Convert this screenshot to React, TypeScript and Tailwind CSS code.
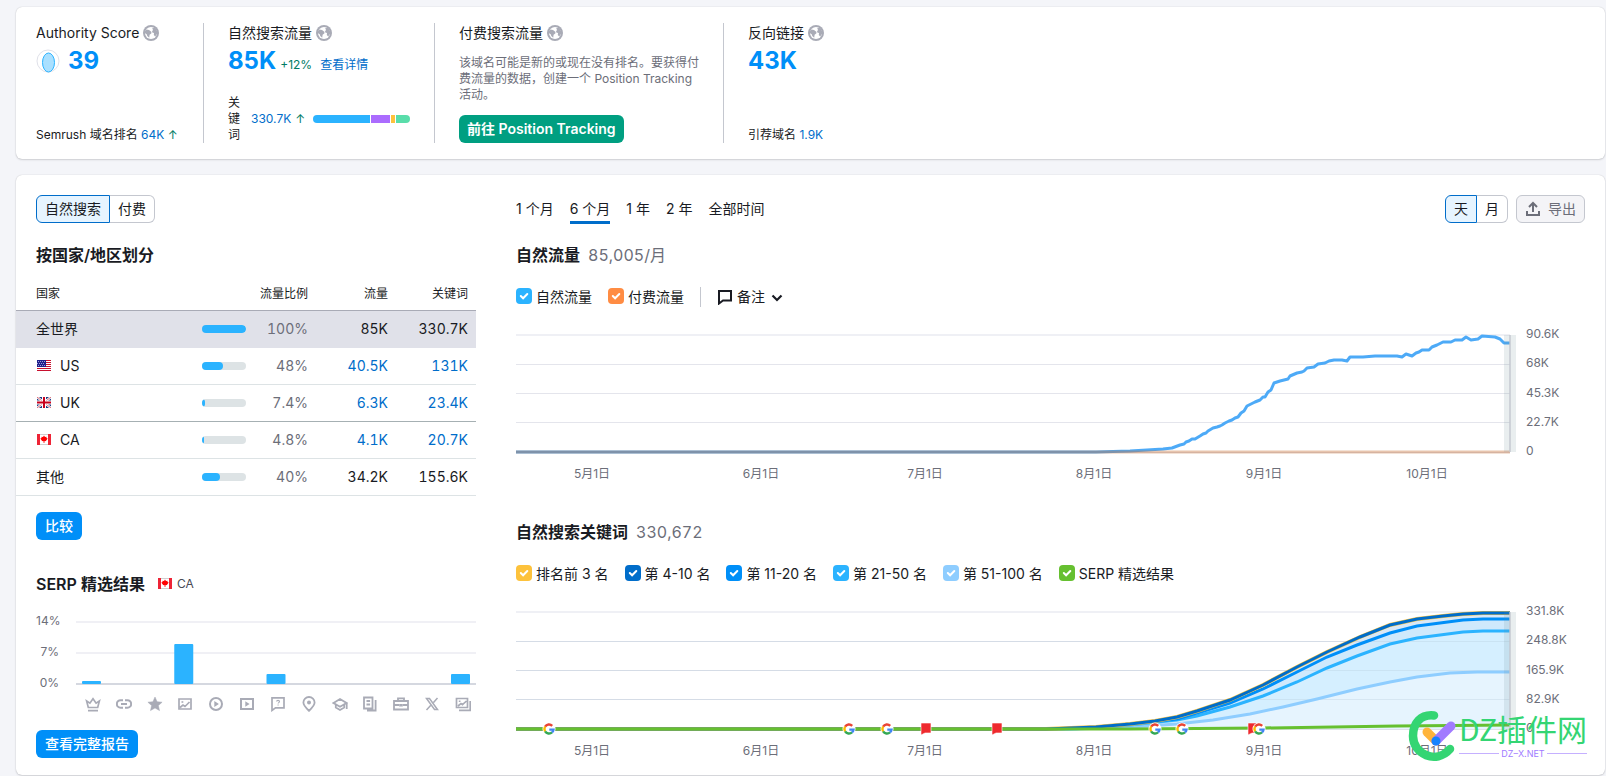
import type { ReactNode } from 'react';

type Point = [number, number];

interface CountryRow {
  name: string;
  flag?: 'us' | 'uk' | 'ca';
  share: number;
  traffic: string;
  keywords: string;
  rowClass?: string;
}

const countries: CountryRow[] = [
  { name: '全世界', share: 100, traffic: '85K', keywords: '330.7K', rowClass: 'bg-[#e0e1e9] border-[#e0e1e9]' },
  { name: 'US', flag: 'us', share: 48, traffic: '40.5K', keywords: '131K' },
  { name: 'UK', flag: 'uk', share: 7.4, traffic: '6.3K', keywords: '23.4K', rowClass: 'border-[#a6b0b3]' },
  { name: 'CA', flag: 'ca', share: 4.8, traffic: '4.1K', keywords: '20.7K' },
  { name: '其他', share: 40, traffic: '34.2K', keywords: '155.6K' },
];

const keywordSeries = [
  { label: '排名前 3 名', color: 'bg-[#fdc23c]' },
  { label: '第 4-10 名', color: 'bg-[#006dca]' },
  { label: '第 11-20 名', color: 'bg-[#008ff8]' },
  { label: '第 21-50 名', color: 'bg-[#2bb3ff]' },
  { label: '第 51-100 名', color: 'bg-[#8ecdff]' },
  { label: 'SERP 精选结果', color: 'bg-[#66c030]' },
];

const CHART_WIDTH = 994;
const BASELINE = 117;

const monthTicks = [
  { x: 76, label: '5月1日' },
  { x: 245, label: '6月1日' },
  { x: 409, label: '7月1日' },
  { x: 578, label: '8月1日' },
  { x: 748, label: '9月1日' },
  { x: 911, label: '10月1日' },
];

const trafficPoints: Point[] = [
  [0, 117], [545, 117], [580, 117], [614, 116], [631, 115], [647, 114], [656, 113], [664, 110], [668, 109],
  [670, 107], [673, 106], [676, 104], [679, 104], [684, 101], [687, 99], [690, 98], [692, 96], [697, 93],
  [701, 92], [704, 91], [706, 90], [709, 88], [713, 86], [716, 85], [719, 83], [722, 82], [725, 78], [728, 76],
  [731, 71], [739, 67], [744, 65], [747, 62], [749, 62], [752, 57], [755, 55], [758, 48], [764, 46], [772, 44],
  [774, 41], [781, 38], [786, 37], [788, 36], [791, 33], [798, 32], [802, 29], [809, 28], [813, 26], [818, 25],
  [826, 25], [831, 26], [834, 22], [840, 22], [847, 22], [859, 21], [871, 21], [881, 21], [886, 22], [890, 19],
  [896, 21], [900, 18], [903, 17], [906, 15], [913, 15], [916, 12], [921, 10], [927, 7], [935, 7], [939, 5],
  [946, 5], [950, 2], [955, 5], [962, 4], [966, 1], [979, 2], [984, 4], [988, 8], [994, 8],
];

const top10: Point[] = [
  [0, 117], [530, 117], [580, 115], [614, 112], [639, 109], [661, 105], [681, 99], [714, 88], [747, 73],
  [781, 55], [811, 40], [844, 25], [874, 13], [901, 7], [927, 4], [947, 2], [967, 1], [994, 1],
];
const top20: Point[] = [
  [0, 117], [540, 117], [580, 115], [614, 112], [661, 107], [681, 101], [714, 91], [747, 77], [781, 60],
  [811, 45], [841, 33], [874, 21], [901, 14], [947, 8], [967, 7], [994, 7],
];
const top50: Point[] = [
  [0, 117], [550, 117], [580, 116], [614, 113], [661, 108], [681, 104], [714, 95], [747, 84], [781, 70],
  [811, 56], [841, 44], [874, 32], [901, 26], [947, 20], [967, 19], [994, 19],
];
const top100: Point[] = [
  [0, 117], [560, 117], [614, 115], [661, 112], [697, 108], [734, 102], [767, 95], [801, 87], [841, 77],
  [874, 70], [901, 65], [934, 61], [961, 60], [994, 60],
];
const serpLine: Point[] = [[0, 117], [614, 117], [747, 116], [881, 114], [994, 113]];

const toLine = (points: Point[]) => points.map(([x, y]) => `${x},${y}`).join(' ');
const toArea = (points: Point[]) => `${toLine(points)} ${CHART_WIDTH},${BASELINE} 0,${BASELINE}`;
const toPercent = (x: number) => `${(x / CHART_WIDTH) * 100}%`;

const GlobeIcon = () => (
  <svg className="size-4 shrink-0" viewBox="0 0 16 16">
    <circle cx="8" cy="8" r="8" fill="#a9abb6" />
    <circle cx="8" cy="8" r="6" fill="#fff" />
    <path
      d="M2 6l1.500-1.500L6 5l2.300 1.700.2 1.600-1.900 1.500-.4 2.900-1.900-1.600-.6-1.800L2 8.200zM9 3.500l3-1 2 3.500v3l-1.800 2.600-1.400-1.700.2-1.800-1.700-.6-.2-1.500 1.100-1.100z"
      fill="#a9abb6"
    />
  </svg>
);

const Flag = ({ code }: { code: 'us' | 'uk' | 'ca' }) => (
  <svg className="h-[11px] w-[14px] shrink-0" viewBox="0 0 14 11">
    {code === 'us' && (
      <>
        <path d="M0 0h14v11H0z" fill="#fff" />
        <path d="M0 .5h14M0 2.5h14M0 4.5h14M0 6.5h14M0 8.5h14M0 10.5h14" stroke="#c8102e" />
        <path d="M0 0h9v7H0z" fill="#20208c" />
        <path d="M1 1.5h8M0 3.5h8M1 5.5h8" stroke="#9c9cd8" strokeDasharray="1 1" />
      </>
    )}
    {code === 'uk' && (
      <>
        <path d="M0 0h14v11H0z" fill="#1b3a80" />
        <path d="M0 0l14 11M14 0L0 11" stroke="#fff" strokeWidth="2.4" />
        <path d="M0 0l14 11M14 0L0 11" stroke="#d04050" strokeWidth=".8" />
        <path d="M7 0v11M0 5.5h14" stroke="#fff" strokeWidth="4" />
        <path d="M7 0v11M0 5.5h14" stroke="#c8001c" strokeWidth="2" />
      </>
    )}
    {code === 'ca' && (
      <>
        <path d="M0 0h14v11H0z" fill="#fff" />
        <path d="M0 .5h14M0 10.5h14" stroke="#d0d0d0" />
        <path d="M0 0h3v11H0zM11 0h3v11h-3z" fill="#ee2436" />
        <path d="M7 1.500l1 1.500 1.500-.3v1.200l1.200.6-1.800 2.500-1.500.2v1.800h-.8V7.200l-1.500-.2-1.800-2.500 1.200-.6V2.700L6 3z" fill="#f00" />
      </>
    )}
  </svg>
);

// SERP feature icons, drawn in the order of the chart columns
const serpIcons: ReactNode[] = [
  <path d="M1.600 5l3.300 2.200L8 2.700l3.100 4.500L14.400 5l-1.700 6.500H3.300zM3 14.700h10" strokeWidth="1.700" />,
  <path d="M7 4.2H4.6a3.7 3.7 0 0 0 0 7.5H7M9 4.2h2.4a3.7 3.7 0 0 1 0 7.5H9M5 8h6" />,
  <path d="M8 1l2.100 4.700 5 .5-3.700 3.400 1.100 5L8 12l-4.500 2.600 1.100-5L.900 6.200l5-.5z" fill="currentColor" strokeWidth=".5" />,
  <>
    <path d="M2 3h12v10H2zM3 11.5l3-2.5 2 1.5L12.5 6" strokeWidth="1.700" />
    <path d="M4.5 5.2h1.8v1.6H4.5z" fill="currentColor" stroke="none" />
  </>,
  <>
    <circle cx="8" cy="8" r="6" />
    <path d="M6.3 5l4.600 3-4.600 3z" fill="currentColor" stroke="none" />
  </>,
  <>
    <path d="M2 3h12v10H2z" />
    <path d="M6.3 5.200L10.600 8l-4.300 2.800z" fill="currentColor" stroke="none" />
  </>,
  <>
    <path d="M2 1.800h12v10H5.500L2 14.400z" strokeWidth="1.700" />
    <path d="M6.600 5.600c0-1.600 2.900-1.600 2.900 0 0 1-1.400 1-1.400 2M8.100 8.400v1.200" strokeWidth="1.100" />
  </>,
  <>
    <path d="M8 14.800C5 12 2.400 9.600 2.400 6.600a5.600 5.600 0 0 1 11.200 0C13.600 9.600 11 12 8 14.800z" strokeWidth="1.800" />
    <circle cx="8" cy="6.600" r="2" fill="currentColor" stroke="none" />
  </>,
  <path d="M1.500 7L8 3l6.500 4L8 10.800zM3.800 8.500v3L8 14l4.200-2.500v-3M14.700 7.500V13" strokeWidth="1.800" />,
  <path d="M2 1.500h8.500v11H2zM4.500 5h3.600M4.500 8.500h3.600M13.600 4v10.500H5" strokeWidth="1.800" />,
  <>
    <path d="M1 5h14v8.500H1zM5 5V2.300h6V5M1 9h5M10 9h5" strokeWidth="1.800" />
    <path d="M6.200 8h3.600v2.500H6.200z" fill="currentColor" stroke="none" />
  </>,
  <>
    <path d="M2.500 2.500h3l8 11h-3z" strokeWidth="1.500" />
    <path d="M13.500 2L9.300 6.700M6.800 9.300L2.500 14" strokeWidth="1.500" />
  </>,
  <>
    <path d="M1.500 2.500h11v9h-11zM3 10l3-2.500 1.500 1.200L11.500 5M15.200 5v9.300H4" strokeWidth="1.700" />
    <path d="M3.800 4.500h1.700v1.500H3.800z" fill="currentColor" stroke="none" />
  </>,
];

// bar heights per SERP feature, in chart pixels
const serpBars = [3, 0, 0, 40, 0, 0, 10, 0, 0, 0, 0, 0, 10];

const SerpChart = () => (
  <div className="mt-[17px] flex pl-5">
    <div className="flex h-[78px] w-[23px] flex-col justify-between text-right text-xs leading-4 text-[#6c6e79]">
      <span>14%</span>
      <span>7%</span>
      <span>0%</span>
    </div>
    <div className="ml-[17px] flex-1">
      <svg className="mt-2 h-[64px] w-full" viewBox="0 0 400 64" preserveAspectRatio="none">
        <path d="M0 1h400M0 32h400" stroke="#f0f0f5" strokeWidth="2" />
        <path d="M0 63h400" stroke="#d5d8e0" strokeWidth="2" />
        {serpBars.map((height, i) =>
          height > 0 ? (
            <rect key={i} x={6 + i * 30.75} y={63 - height} width="19" height={height} rx="1" fill="#2bb3ff" />
          ) : null
        )}
      </svg>
      <div className="mt-[11px] flex justify-between pr-[5px] pl-[9px]">
        {serpIcons.map((icon, i) => (
          <svg key={i} className="size-4 text-[#a9abb6]" viewBox="0 0 16 16" fill="none" stroke="currentColor" strokeWidth="2">
            {icon}
          </svg>
        ))}
      </div>
    </div>
  </div>
);

const GoogleMark = () => (
  <>
    <circle r="6.500" fill="#fff" />
    <g fill="none" strokeWidth="2.400">
      <path d="M3.200-3.200A4.500 4.500 0 0 0-3.900-2.300" stroke="#ea4335" />
      <path d="M-3.900-2.300a4.500 4.500 0 0 0 0 4.600" stroke="#fbbc05" />
      <path d="M-3.900 2.300A4.500 4.500 0 0 0 3 3.400" stroke="#34a853" />
      <path d="M3 3.400A4.500 4.500 0 0 0 4.500.600H.300" stroke="#4285f4" />
    </g>
  </>
);

const NoteMark = () => <path d="M-5-6H5V4H-1L-5 6z" fill="#ee2a2e" stroke="#fff" strokeWidth=".6" />;

const markers = [
  { x: 33, type: 'google' },
  { x: 333, type: 'google' },
  { x: 371, type: 'google' },
  { x: 410, type: 'note' },
  { x: 481, type: 'note' },
  { x: 639, type: 'google' },
  { x: 666, type: 'google' },
  { x: 737, type: 'note' },
  { x: 743, type: 'google' },
];

interface TrendChartProps {
  yLabels: string[];
  withMarkers?: boolean;
  children: ReactNode;
}

const TrendChart = ({ yLabels, withMarkers, children }: TrendChartProps) => (
  <div className="flex">
    <svg className="mt-2 h-[150px] min-w-0 flex-1 overflow-visible">
      <svg width="100%" height="118" viewBox="0 -1 994 118" preserveAspectRatio="none" overflow="visible">
        <path d="M0 0h994" stroke="#eff0f5" strokeWidth="2" />
        <path d="M0 29.500h994M0 58.500h994M0 87.500h994" stroke="#e4e5ec" />
        <path d="M0 117.500h994" stroke="#e0e1e9" />
        {children}
        <path d="M988 0h12v117h-12z" fill="#6b8a92" opacity=".15" />
        <path d="M994 0v117" stroke="#c4c7cf" strokeWidth="2" opacity=".7" />
      </svg>
      {withMarkers &&
        markers.map((marker) => (
          <svg key={marker.x} x={toPercent(marker.x)} y="118" overflow="visible">
            {marker.type === 'google' ? <GoogleMark /> : <NoteMark />}
          </svg>
        ))}
      {monthTicks.map((tick) => (
        <text key={tick.label} x={toPercent(tick.x)} y="144" textAnchor="middle" className="fill-[#6c6e79] text-xs">
          {tick.label}
        </text>
      ))}
    </svg>
    <div className="flex h-[133px] w-[75px] flex-col justify-between pl-4 text-xs leading-4 text-[#6c6e79]">
      {yLabels.map((label) => (
        <span key={label}>{label}</span>
      ))}
    </div>
  </div>
);

const Check = ({ label, color }: { label: string; color: string }) => (
  <label className="flex items-start gap-1 text-sm leading-5">
    <span className="relative mt-px flex size-4">
      <input type="checkbox" defaultChecked className={`size-4 appearance-none rounded ${color}`} />
      <svg className="pointer-events-none absolute inset-0 size-4" viewBox="0 0 16 16" fill="none">
        <path d="M4.800 8l2.300 2.300L11.300 6" stroke="#fff" strokeWidth="2" strokeLinecap="round" />
      </svg>
    </span>
    {label}
  </label>
);

const Pills = ({ first, second }: { first: string; second: string }) => (
  <div className="flex text-sm leading-5">
    <button className="h-7 rounded-l-md border border-[#006dca] bg-[#e6f4ff] px-2">{first}</button>
    <button className="h-7 rounded-r-md border border-l-0 border-[#c4c7cf] px-2">{second}</button>
  </div>
);

const Summary = () => (
  <section className="flex rounded-md bg-white px-5 py-4 shadow-[0_0_1px_rgba(25,27,35,0.25),0_1px_2px_rgba(25,27,35,0.15)]">
    <div className="flex min-h-[120px] w-[168px] flex-col border-r border-[#c4c7cf]">
      <div className="flex items-center gap-1 text-sm leading-5">
        Authority Score <GlobeIcon />
      </div>
      <div className="mt-0.5 flex items-center gap-2 text-2xl leading-8 font-bold text-[#008ff8]">
        <svg className="size-6" viewBox="0 0 24 24">
          <circle cx="12" cy="12" r="11" fill="#fff" stroke="#e0e1e9" />
          <ellipse cx="12.500" cy="13.500" rx="6" ry="9.500" fill="#aae0ff" stroke="#2bb3ff" />
        </svg>
        39
      </div>
      <div className="mt-auto text-xs leading-4">
        Semrush 域名排名 <a href="#rank" className="text-[#006dca]">64K</a> <span className="text-[#007c65]">↑</span>
      </div>
    </div>
    <div className="flex w-[231px] flex-col border-r border-[#c4c7cf] px-6">
      <div className="flex items-center gap-1 text-sm leading-5">
        自然搜索流量 <GlobeIcon />
      </div>
      <div className="mt-0.5 flex items-baseline">
        <span className="text-2xl leading-8 font-bold text-[#008ff8]">85K</span>
        <span className="ml-1 text-xs text-[#007c65]">+12%</span>
        <a href="#details" className="ml-2 text-xs text-[#006dca]">查看详情</a>
      </div>
      <div className="mt-auto flex items-center text-xs leading-4">
        <span className="w-3">关键词</span>
        <a href="#keywords" className="ml-[11px] text-[#006dca]">330.7K</a>
        <span className="ml-1 text-[#007c65]">↑</span>
        <div className="ml-2 flex h-2 flex-1 gap-px overflow-hidden rounded">
          <div className="flex-[57] bg-[#2bb3ff]" />
          <div className="flex-[19] bg-[#ab6cfe]" />
          <div className="flex-[4] bg-[#fdc23c]" />
          <div className="flex-[14] bg-[#59ddaa]" />
        </div>
      </div>
    </div>
    <div className="flex w-[289px] flex-col items-start border-r border-[#c4c7cf] px-6">
      <div className="flex items-center gap-1 text-sm leading-5">
        付费搜索流量 <GlobeIcon />
      </div>
      <p className="mt-3 text-xs leading-4 text-[#6c6e79]">
        该域名可能是新的或现在没有排名。要获得付费流量的数据，创建一个 Position Tracking 活动。
      </p>
      <button className="mt-auto h-7 rounded-md bg-[#009f81] px-2 text-sm leading-5 font-semibold whitespace-nowrap text-white">
        前往 Position Tracking
      </button>
    </div>
    <div className="flex flex-col pl-6">
      <div className="flex items-center gap-1 text-sm leading-5">
        反向链接 <GlobeIcon />
      </div>
      <div className="mt-0.5 text-2xl leading-8 font-bold text-[#008ff8]">43K</div>
      <div className="mt-auto text-xs leading-4">
        引荐域名 <a href="#domains" className="text-[#006dca]">1.9K</a>
      </div>
    </div>
  </section>
);

const CountryTable = () => (
  <table className="mt-3 w-full text-sm leading-5">
    <thead>
      <tr className="h-[31px] border-b border-[#a9abb6] text-xs leading-4">
        <th className="pl-5 text-left font-normal">国家</th>
        <th className="w-[60px]" aria-label="份额" />
        <th className="w-[61px] text-right font-normal whitespace-nowrap">流量比例</th>
        <th className="w-20 text-right font-normal">流量</th>
        <th className="w-[88px] pr-2 text-right font-normal">关键词</th>
      </tr>
    </thead>
    <tbody>
      {countries.map((row) => {
        const valueColor = row.flag ? 'text-[#006dca]' : '';
        return (
          <tr key={row.name} className={`h-[37px] border-b tabular-nums ${row.rowClass ?? 'border-[#dde3e5]'}`}>
            <td className="pl-5">
              <span className="flex items-center gap-[9px]">
                {row.flag && <span className="pl-px"><Flag code={row.flag} /></span>}
                {row.name}
              </span>
            </td>
            <td>
              <div className="ml-[15px] h-2 w-11 overflow-hidden rounded bg-[#dde3e5]">
                <div className="h-2 rounded-r bg-[#2bb3ff]" style={{ width: `${row.share}%` }} />
              </div>
            </td>
            <td className="text-right text-[#6c6e79]">{row.share}%</td>
            <td className={`text-right ${valueColor}`}>{row.flag ? <a href="#traffic">{row.traffic}</a> : row.traffic}</td>
            <td className={`pr-2 text-right ${valueColor}`}>{row.flag ? <a href="#keywords">{row.keywords}</a> : row.keywords}</td>
          </tr>
        );
      })}
    </tbody>
  </table>
);

const Watermark = () => (
  <div className="pointer-events-none absolute right-[18px] bottom-[13px] flex items-center gap-px">
    <svg className="h-[52px] w-[50px]" viewBox="0 0 50 52" fill="none" strokeLinecap="round">
      <path d="M26 5.500C13 4 5 13 5 26c0 18 23 29 37 13" stroke="#34d573" strokeWidth="8.500" />
      <path d="M19 22l9 9" stroke="#ffb43c" strokeWidth="9" />
      <path d="M28 31l15-15" stroke="#a17bff" strokeWidth="9" />
      <circle cx="28" cy="31" r="4.500" fill="#1683ff" />
    </svg>
    <div className="text-center">
      <div className="font-['Noto_Sans_CJK_SC',sans-serif] text-[30px] leading-8 font-normal text-[#34d573]">DZ插件网</div>
      <div className="mt-1 flex items-center gap-0.5 text-[9px] leading-3 text-[#a17bff]">
        <span className="h-px flex-1 bg-[#c5b0ff]" />
        DZ–X.NET
        <span className="h-px flex-1 bg-[#c5b0ff]" />
      </div>
    </div>
  </div>
);

const periods = ['1 个月', '6 个月', '1 年', '2 年', '全部时间'];

export default function App() {
  return (
    <main className="flex flex-col gap-4 bg-[#f4f5f9] pt-[7px] pr-px pb-px pl-4 font-['Inter','Noto_Sans_CJK_SC',sans-serif] text-[#191b23]">
      <Summary />
      <section className="relative flex gap-10 rounded-md bg-white pt-5 pr-5 shadow-[0_0_1px_rgba(25,27,35,0.25),0_1px_2px_rgba(25,27,35,0.15)]">
        <div className="w-[460px] shrink-0 pb-[17px]">
          <div className="pl-5">
            <Pills first="自然搜索" second="付费" />
            <h2 className="mt-5 text-base leading-6 font-semibold">按国家/地区划分</h2>
          </div>
          <CountryTable />
          <div className="pl-5">
            <button className="mt-4 h-7 rounded-md bg-[#008ff8] px-[9px] text-sm leading-5 font-medium text-white">比较</button>
            <div className="mt-8 flex items-center">
              <h2 className="text-base leading-6 font-semibold">SERP 精选结果</h2>
              <span className="ml-[13px] flex items-center gap-[5px] text-xs leading-4 text-[#484a54]">
                <Flag code="ca" /> CA
              </span>
            </div>
          </div>
          <SerpChart />
          <button className="mt-[18px] ml-5 h-7 rounded-md bg-[#008ff8] px-[9px] text-sm leading-5 font-medium text-white">
            查看完整报告
          </button>
        </div>

        <div className="min-w-0 flex-1">
          <div className="flex h-7 items-center justify-between">
            <div className="flex gap-4 text-sm leading-5">
              {periods.map((period) => (
                <button
                  key={period}
                  className={`h-[30px] border-b-3 pt-[3px] ${period === '6 个月' ? 'border-[#006dca]' : 'border-transparent'}`}
                >
                  {period}
                </button>
              ))}
            </div>
            <div className="flex gap-2">
              <Pills first="天" second="月" />
              <button className="flex h-7 items-center gap-[7px] rounded-md border border-[#c4c7cf] bg-[#f4f4f7] px-2 text-sm leading-5 text-[#6c6e79]">
                <svg className="size-4" viewBox="0 0 16 16" fill="none" stroke="currentColor" strokeWidth="2">
                  <path d="M2 10v4h12v-4M8 11V3M4 6l4-4 4 4" />
                </svg>
                导出
              </button>
            </div>
          </div>

          <h2 className="mt-5 text-base leading-6 font-semibold">
            自然流量 <span className="ml-1 font-normal text-[#6c6e79] tabular-nums">85,005/月</span>
          </h2>
          <div className="mt-5 flex h-5 items-center">
            <Check label="自然流量" color="bg-[#2bb3ff]" />
            <div className="ml-4">
              <Check label="付费流量" color="bg-[#ff8c43]" />
            </div>
            <div className="mx-4 h-5 w-px bg-[#c4c7cf]" />
            <button className="flex items-center gap-1 text-sm leading-5">
              <svg className="size-4" viewBox="0 0 16 16" fill="none" stroke="currentColor" strokeWidth="2">
                <path d="M2 2h12v9.500H6L2 14.500z" />
              </svg>
              备注
              <svg className="size-4" viewBox="0 0 16 16" fill="none" stroke="currentColor" strokeWidth="2.200">
                <path d="M3.500 6.500L8 11l4.500-4.500" />
              </svg>
            </button>
          </div>
          <div className="mt-[19px]">
            <TrendChart yLabels={['90.6K', '68K', '45.3K', '22.7K', '0']}>
              <polyline points={toLine(trafficPoints)} fill="none" stroke="#4daaf7" strokeWidth="3" strokeLinejoin="round" />
              <path d="M0 117h994" stroke="#c87038" strokeWidth="3" opacity=".4" />
            </TrendChart>
          </div>

          <h2 className="mt-9 text-base leading-6 font-semibold">
            自然搜索关键词 <span className="ml-1 font-normal text-[#6c6e79] tabular-nums">330,672</span>
          </h2>
          <div className="mt-5 flex h-5 items-center gap-4">
            {keywordSeries.map((series) => (
              <Check key={series.label} label={series.label} color={series.color} />
            ))}
          </div>
          <div className="mt-[19px]">
            <TrendChart yLabels={['331.8K', '248.8K', '165.9K', '82.9K', '0']} withMarkers>
              <g fill="none" strokeWidth="3">
                <polygon points={toArea(top10)} fill="#cfe2f4" opacity=".8" />
                <polygon points={toArea(top20)} fill="#cce8fe" opacity=".8" />
                <polygon points={toArea(top50)} fill="#d5f0ff" opacity=".9" />
                <polygon points={toArea(top100)} fill="#e8f4fe" opacity=".9" />
                <path d="M0 29.500h994M0 58.500h994M0 87.500h994" stroke="#b4c8d8" strokeWidth="1" opacity=".3" />
                <polyline points={toLine(top100)} stroke="#8ecdff" />
                <polyline points={toLine(top50)} stroke="#2bb3ff" />
                <polyline points={toLine(top20)} stroke="#008ff8" />
                <polyline points={toLine(top10)} stroke="#fdc23c" strokeWidth="4" />
                <polyline points={toLine(top10)} stroke="#006dca" />
                <polyline points={toLine(serpLine)} stroke="#66c030" />
              </g>
            </TrendChart>
          </div>
        </div>
        <Watermark />
      </section>
    </main>
  );
}
